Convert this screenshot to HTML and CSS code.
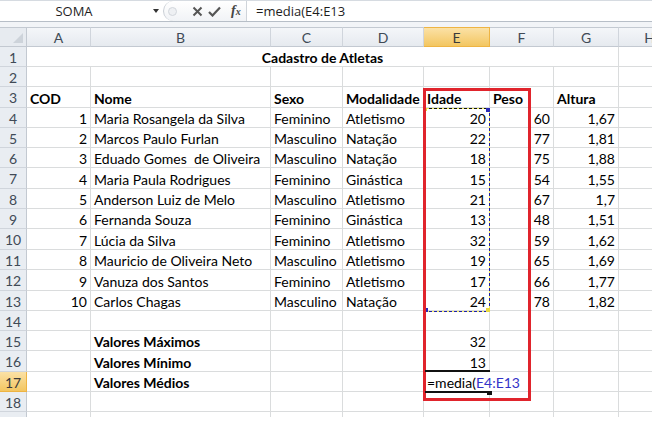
FILE: index.html
```html
<!DOCTYPE html>
<html lang="pt">
<head>
<meta charset="utf-8">
<title>Cadastro de Atletas</title>
<link rel="stylesheet" href="styles.css">
</head>
<body>
<div class="app">
  <div class="fbar">
    <div class="namebox"><span class="nm">SOMA</span></div>
    <span class="dd"></span>
    <div class="pill">
      <span class="knob"></span>
      <svg class="ico" width="11" height="11" viewBox="0 0 11 11"><path d="M1.5 1.5 L9.5 9.5 M9.5 1.5 L1.5 9.5" stroke="#555" stroke-width="2" fill="none"/></svg>
      <svg class="ico" width="13" height="11" viewBox="0 0 13 11"><path d="M1 6 L4.5 9.5 L12 1.5" stroke="#555" stroke-width="2.2" fill="none"/></svg>
      <span class="fx">f<span class="fxs">x</span></span>
    </div>
    <div class="finput">=media(E4:E13</div>
  </div>
  <div class="band"></div>
  <div class="sheet">
    <div class="corner"><span class="tri"></span></div>
    <div class="ch">A</div><div class="ch">B</div><div class="ch">C</div><div class="ch">D</div><div class="ch sel">E</div><div class="ch">F</div><div class="ch">G</div><div class="ch">H</div>

    <div class="rh">1</div><div class="c b title">Cadastro de Atletas</div><div class="c"></div>
    <div class="rh">2</div><div class="c"></div><div class="c"></div><div class="c"></div><div class="c"></div><div class="c"></div><div class="c"></div><div class="c"></div><div class="c"></div>
    <div class="rh">3</div><div class="c b">COD</div><div class="c b">Nome</div><div class="c b">Sexo</div><div class="c b">Modalidade</div><div class="c b">Idade</div><div class="c b">Peso</div><div class="c b">Altura</div><div class="c"></div>

    <div class="rh">4</div><div class="c r">1</div><div class="c">Maria Rosangela da Silva</div><div class="c">Feminino</div><div class="c">Atletismo</div><div class="c r">20</div><div class="c r">60</div><div class="c r">1,67</div><div class="c"></div>
    <div class="rh">5</div><div class="c r">2</div><div class="c">Marcos Paulo Furlan</div><div class="c">Masculino</div><div class="c">Natação</div><div class="c r">22</div><div class="c r">77</div><div class="c r">1,81</div><div class="c"></div>
    <div class="rh">6</div><div class="c r">3</div><div class="c">Eduado Gomes&nbsp; de Oliveira</div><div class="c">Masculino</div><div class="c">Natação</div><div class="c r">18</div><div class="c r">75</div><div class="c r">1,88</div><div class="c"></div>
    <div class="rh">7</div><div class="c r">4</div><div class="c">Maria Paula Rodrigues</div><div class="c">Feminino</div><div class="c">Ginástica</div><div class="c r">15</div><div class="c r">54</div><div class="c r">1,55</div><div class="c"></div>
    <div class="rh">8</div><div class="c r">5</div><div class="c">Anderson Luiz de Melo</div><div class="c">Masculino</div><div class="c">Atletismo</div><div class="c r">21</div><div class="c r">67</div><div class="c r">1,7</div><div class="c"></div>
    <div class="rh">9</div><div class="c r">6</div><div class="c">Fernanda Souza</div><div class="c">Feminino</div><div class="c">Ginástica</div><div class="c r">13</div><div class="c r">48</div><div class="c r">1,51</div><div class="c"></div>
    <div class="rh">10</div><div class="c r">7</div><div class="c">Lúcia da Silva</div><div class="c">Feminino</div><div class="c">Atletismo</div><div class="c r">32</div><div class="c r">59</div><div class="c r">1,62</div><div class="c"></div>
    <div class="rh">11</div><div class="c r">8</div><div class="c">Mauricio de Oliveira Neto</div><div class="c">Masculino</div><div class="c">Atletismo</div><div class="c r">19</div><div class="c r">65</div><div class="c r">1,69</div><div class="c"></div>
    <div class="rh">12</div><div class="c r">9</div><div class="c">Vanuza dos Santos</div><div class="c">Feminino</div><div class="c">Atletismo</div><div class="c r">17</div><div class="c r">66</div><div class="c r">1,77</div><div class="c"></div>
    <div class="rh">13</div><div class="c r">10</div><div class="c">Carlos Chagas</div><div class="c">Masculino</div><div class="c">Natação</div><div class="c r">24</div><div class="c r">78</div><div class="c r">1,82</div><div class="c"></div>

    <div class="rh">14</div><div class="c"></div><div class="c"></div><div class="c"></div><div class="c"></div><div class="c"></div><div class="c"></div><div class="c"></div><div class="c"></div>
    <div class="rh">15</div><div class="c"></div><div class="c b">Valores Máximos</div><div class="c"></div><div class="c"></div><div class="c r">32</div><div class="c"></div><div class="c"></div><div class="c"></div>
    <div class="rh">16</div><div class="c"></div><div class="c b">Valores Mínimo</div><div class="c"></div><div class="c"></div><div class="c r">13</div><div class="c"></div><div class="c"></div><div class="c"></div>
    <div class="rh sel">17</div><div class="c"></div><div class="c b">Valores Médios</div><div class="c"></div><div class="c"></div><div class="c nr edit">=media(<span class="ref">E4:E13</span><span class="caret"></span></div><div class="c"></div><div class="c"></div><div class="c"></div>
    <div class="rh">18</div><div class="c"></div><div class="c"></div><div class="c"></div><div class="c"></div><div class="c"></div><div class="c"></div><div class="c"></div><div class="c"></div>
    <div class="rh stub"></div><div class="c stub"></div><div class="c stub"></div><div class="c stub"></div><div class="c stub"></div><div class="c stub"></div><div class="c stub"></div><div class="c stub"></div><div class="c stub"></div>

    <svg class="ants" width="66" height="204" viewBox="0 0 66 204">
      <rect x="0.5" y="0.5" width="65" height="203" fill="none" stroke="#f2ee5a" stroke-width="1"/>
      <path d="M0 0.5 H66" stroke="#111" stroke-width="1" stroke-dasharray="3 2"/>
      <path d="M0.5 0 V204" stroke="#111" stroke-width="1" stroke-dasharray="3 2"/>
      <path d="M65.5 0 V204" stroke="#1f1fa8" stroke-width="1" stroke-dasharray="3 2"/>
      <path d="M0 203.5 H66" stroke="#1f1fa8" stroke-width="1" stroke-dasharray="3 2"/>
      <rect x="0" y="0" width="3" height="3" fill="#e8d840"/>
      <rect x="62" y="0" width="4" height="4" fill="#2a2ab8"/>
      <rect x="0" y="200" width="4" height="4" fill="#2a2ab8"/>
      <rect x="62" y="200" width="4" height="4" fill="#e8d840"/>
    </svg>
    <div class="redbox"></div>
    <div class="edtop"></div>
    <div class="edbot"></div>
    <div class="handle"></div>
  </div>
</div>
</body>
</html>
```

FILE: styles.css
```css
* { box-sizing: border-box; }
body {
  margin: 0;
  background: #ffffff;
  font-family: Lato, "Liberation Sans", sans-serif;
}
.app {
  width: 652px;
  height: 425px;
  overflow: hidden;
  background: #ffffff;
}

/* formula bar */
.fbar {
  height: 22px;
  display: flex;
  align-items: stretch;
  border-top: 1px solid #d6dbe1;
  border-bottom: 1px solid #b7bec7;
  background: #ffffff;
  font-family: "Open Sans", "DejaVu Sans", sans-serif;
  font-size: 13px;
  color: #1e1e1e;
}
.namebox {
  width: 150px;
  display: flex;
  align-items: center;
  justify-content: center;
  padding-right: 2px;
}
.dd {
  width: 13px;
  position: relative;
}
.dd::after {
  content: "";
  position: absolute;
  left: 3px;
  top: 8px;
  border-left: 3px solid transparent;
  border-right: 3px solid transparent;
  border-top: 4px solid #333;
}
.pill {
  width: 84px;
  display: flex;
  align-items: center;
  gap: 5px;
  padding-left: 4px;
  border-left: 1px solid #c9ced5;
  border-radius: 10px 0 0 10px;
  background: linear-gradient(#ffffff, #f1f3f6);
  border-right: 1px solid #cfd4da;
}
.knob {
  width: 9px;
  height: 9px;
  border-radius: 50%;
  border: 1px solid #d2d6dc;
  background: #eef0f3;
  margin-right: 10px;
}
.ico { display: block; }
.fx {
  font-family: "Liberation Serif", "DejaVu Serif", serif;
  font-style: italic;
  font-weight: bold;
  font-size: 14px;
  color: #444;
  margin-left: 5px;
}
.fxs { font-size: 10px; }
.finput {
  flex: 1;
  display: flex;
  align-items: center;
  padding-left: 9px;
}
.band {
  height: 5px;
  background: #f2f4f7;
}

/* sheet */
.sheet {
  position: relative;
  display: grid;
  grid-template-columns: 27px 64px 180px 72px 81px 66px 64px 65px 62px;
  grid-template-rows: 20px 20px 20px 21px 20px 20px 20px 21px 20px 20px 21px 20px 21px 20px 20px 20px 21px 20px 20px 5px;
  font-size: 14px;
  color: #000;
}
.corner {
  position: relative;
  background: #e7ebf0;
  border-top: 1px solid #c3c9d1;
  border-right: 1px solid #c3c9d1;
  border-bottom: 1px solid #c3c9d1;
}
.tri {
  position: absolute;
  right: 3px;
  bottom: 3px;
  border-left: 10px solid transparent;
  border-bottom: 10px solid #cdd3da;
}
.ch, .rh {
  display: flex;
  align-items: center;
  justify-content: center;
  background: linear-gradient(#f4f6f9, #e6eaef);
  color: #404a56;
  font-size: 14px;
}
.ch {
  border-top: 1px solid #c3c9d1;
  border-right: 1px solid #d0d5dc;
  border-bottom: 1px solid #c3c9d1;
}
.rh {
  border-right: 1px solid #c3c9d1;
  border-bottom: 1px solid #d0d5dc;
  background: #e9edf2;
  padding-top: 1px;
}
.ch.sel, .rh.sel {
  background: linear-gradient(#fbe1a6, #f3c661);
  border-color: #eeb443;
  color: #3b3b3b;
}
.c {
  display: flex;
  align-items: flex-end;
  padding: 0 3px 0 3px;
  line-height: 17px;
  white-space: nowrap;
  border-right: 1px solid #dadcdd;
  border-bottom: 1px solid #dadcdd;
}
.c.r { justify-content: flex-end; padding-right: 3px; }
.c.b { font-weight: bold; }
.c.title {
  grid-column: 2 / 9;
  justify-content: center;
}
.c.nr { border-right-color: transparent; }
.stub { border-bottom: none; }
.edit {
  position: relative;
  overflow: visible;
}
.ref { color: #3434c8; }
.caret {
  display: inline-block;
  width: 1px;
  height: 16px;
  background: #000;
  margin-left: 1px;
  align-self: center;
}

/* overlays */
.ants {
  position: absolute;
  left: 424px;
  top: 81px;
}
.redbox {
  position: absolute;
  left: 423px;
  top: 61px;
  width: 108px;
  height: 313px;
  border: 3px solid #e0242c;
}
.edtop {
  position: absolute;
  left: 425px;
  top: 343px;
  width: 65px;
  height: 2px;
  background: #111;
}
.edbot {
  position: absolute;
  left: 425px;
  top: 364px;
  width: 62px;
  height: 2px;
  background: #111;
}
.handle {
  position: absolute;
  left: 487px;
  top: 364px;
  width: 5px;
  height: 4px;
  background: #111;
}
```
